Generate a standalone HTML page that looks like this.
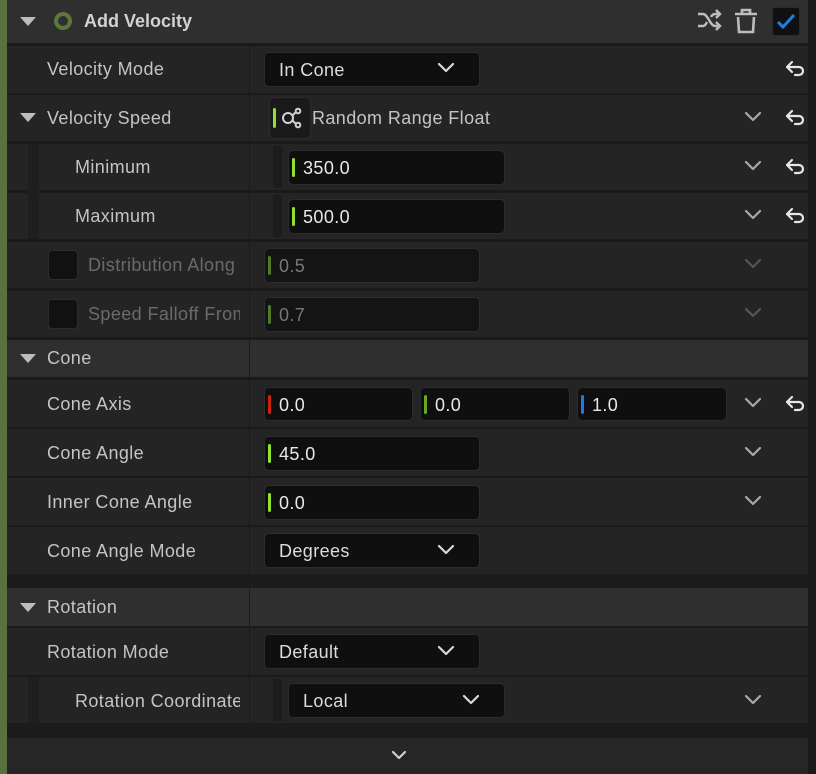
<!DOCTYPE html><html><head><style>
*{margin:0;padding:0;box-sizing:border-box}
body{width:816px;height:774px;background:#1a1a1a;position:relative;overflow:hidden;font-family:"Liberation Sans",sans-serif;font-size:18px;letter-spacing:0.4px;color:#c4c4c4}
div,svg{position:absolute}
.row{left:7px;width:801px;background:#242424}
.hd{background:#2f2f2f}
.dv{left:249px;width:1px;background:#1a1a1a}
.lb{left:47px;white-space:nowrap;line-height:20px}
.in{background:#0f0f0f;border:1.5px solid #2c2c2c;border-radius:5px;height:35px}
.in span{position:absolute;left:14px;top:7px;color:#e8e8e8;line-height:20px}
.bar{position:absolute;left:3px;top:7px;width:3px;height:19px;border-radius:2px;background:#8fe02f}
.tri{width:0;height:0;border-left:8px solid transparent;border-right:8px solid transparent;border-top:9px solid #bdbdbd}
</style></head><body>
<div style="left:0;top:0;width:7px;height:774px;background:#5a7040"></div>
<div class="row hd" style="top:0;height:43px"></div>
<div class="tri" style="left:20px;top:17px"></div>
<div style="left:54px;top:12px;width:18px;height:18px;border:4px solid #5b783a;border-radius:50%"></div>
<div style="left:84px;top:11px;font-weight:bold;font-size:18px;letter-spacing:0;color:#d2d2d2">Add Velocity</div>
<svg style="left:697px;top:8px" width="26" height="24" viewBox="0 0 26 24" fill="none" stroke="#bdbdbd" stroke-width="2.4"><path d="M1 6h5c5 0 7 12 12 12h5M1 18h5c2 0 3-2 4-4M14 9c1-2 2-3 4-3h5M19 2l4 4-4 4M19 14l4 4-4 4"/></svg>
<svg style="left:733px;top:6px" width="26" height="28" viewBox="0 0 26 28" fill="none" stroke="#bdbdbd" stroke-width="2.6"><path d="M2 8h22M9 8V4h8v4M5 11l1 15h14l1-15"/></svg>
<div style="left:772px;top:7px;width:28px;height:29px;background:#101010;border-radius:3px;border:1px solid #2a2a2a"></div>
<svg style="left:776px;top:12px" width="20" height="20" viewBox="0 0 20 20" fill="none" stroke="#1f7fe6" stroke-width="3"><path d="M2 10l5 5 11-12"/></svg>

<div class="row" style="top:46px;height:47px"></div>
<div class="lb" style="top:59px">Velocity Mode</div>
<div class="in" style="left:264px;top:52px;width:216px"><span style="color:#dcdcdc">In Cone</span></div>
<div class="row" style="top:95px;height:46px"></div>
<div class="tri" style="left:20px;top:113px"></div>
<div class="lb" style="top:108px">Velocity Speed</div>
<div class="in" style="left:269px;top:97px;width:42px;height:42px;background:#1a1a1a"><div class="bar" style="top:10px;height:20px"></div></div>
<svg style="left:281px;top:107px" width="22" height="22" viewBox="0 0 22 22" fill="none" stroke="#d0d0d0" stroke-width="2"><circle cx="7" cy="11" r="5"/><circle cx="17" cy="4" r="2.3"/><circle cx="17" cy="18" r="2.3"/><path d="M11 9l4-4M11 13l4 4"/></svg>
<div class="lb" style="left:312px;top:108px">Random Range Float</div>
<div class="row" style="top:144px;height:46px"></div>
<div class="row" style="top:193px;height:46px"></div>
<div style="left:28px;top:144px;width:11px;height:95px;background:#1e1e1e"></div>
<div style="left:273px;top:146px;width:9px;height:42px;background:#1c1c1c"></div>
<div style="left:273px;top:195px;width:9px;height:42px;background:#1c1c1c"></div>
<div class="lb" style="left:75px;top:157px">Minimum</div>
<div class="lb" style="left:75px;top:206px">Maximum</div>
<div class="in" style="left:288px;top:150px;width:217px"><div class="bar"></div><span>350.0</span></div>
<div class="in" style="left:288px;top:199px;width:217px"><div class="bar"></div><span>500.0</span></div>
<div class="row" style="top:242px;height:46px"></div>
<div class="row" style="top:291px;height:46px"></div>
<div style="left:48px;top:250px;width:30px;height:30px;background:#111;border:1.5px solid #2c2c2c;border-radius:4px"></div>
<div style="left:48px;top:299px;width:30px;height:30px;background:#111;border:1.5px solid #2c2c2c;border-radius:4px"></div>
<div class="lb" style="left:88px;top:255px;width:152px;overflow:hidden;color:#6a6a6a">Distribution Along</div>
<div class="lb" style="left:88px;top:304px;width:152px;overflow:hidden;color:#6a6a6a">Speed Falloff From</div>
<div class="in" style="left:264px;top:248px;width:216px;background:#141414"><div class="bar" style="background:#4e7a28"></div><span style="color:#777">0.5</span></div>
<div class="in" style="left:264px;top:297px;width:216px;background:#141414"><div class="bar" style="background:#4e7a28"></div><span style="color:#777">0.7</span></div>
<div class="row hd" style="top:340px;height:37px"></div>
<div class="tri" style="left:20px;top:354px"></div>
<div class="lb" style="top:348px">Cone</div>
<div class="row" style="top:380px;height:47px"></div>
<div class="row" style="top:429px;height:47px"></div>
<div class="row" style="top:478px;height:47px"></div>
<div class="row" style="top:527px;height:47px"></div>
<div class="lb" style="top:394px">Cone Axis</div>
<div class="lb" style="top:443px">Cone Angle</div>
<div class="lb" style="top:492px">Inner Cone Angle</div>
<div class="lb" style="top:541px">Cone Angle Mode</div>
<div class="in" style="left:264px;top:387px;width:149px;height:34px"><div class="bar" style="background:#d0220a"></div><span>0.0</span></div>
<div class="in" style="left:420px;top:387px;width:150px;height:34px"><div class="bar" style="background:#6aa81e"></div><span>0.0</span></div>
<div class="in" style="left:577px;top:387px;width:150px;height:34px"><div class="bar" style="background:#2178ee"></div><span>1.0</span></div>
<div class="in" style="left:264px;top:436px;width:216px"><div class="bar"></div><span>45.0</span></div>
<div class="in" style="left:264px;top:485px;width:216px"><div class="bar"></div><span>0.0</span></div>
<div class="in" style="left:264px;top:533px;width:216px"><span style="color:#dcdcdc">Degrees</span></div>
<div class="row" style="top:574px;height:14px;background:#1c1c1c"></div>
<div class="row hd" style="top:588px;height:38px"></div>
<div class="tri" style="left:20px;top:603px"></div>
<div class="lb" style="top:597px">Rotation</div>
<div class="row" style="top:628px;height:47px"></div>
<div class="row" style="top:677px;height:46px"></div>
<div style="left:28px;top:677px;width:11px;height:46px;background:#1e1e1e"></div>
<div style="left:273px;top:679px;width:9px;height:42px;background:#1c1c1c"></div>
<div class="lb" style="top:642px">Rotation Mode</div>
<div class="lb" style="left:75px;top:691px;width:165px;overflow:hidden">Rotation Coordinate</div>
<div class="in" style="left:264px;top:634px;width:216px"><span style="color:#dcdcdc">Default</span></div>
<div class="in" style="left:288px;top:683px;width:217px"><span style="color:#dcdcdc">Local</span></div>
<div class="row" style="top:723px;height:15px;background:#1c1c1c"></div>
<div class="row" style="top:738px;height:36px;background:#262626"></div>

<div class="dv" style="top:46px;height:294px"></div>
<div class="dv" style="top:340px;height:234px"></div>
<div class="dv" style="top:588px;height:135px"></div>

<svg width="816" height="774" style="left:0;top:0" fill="none" stroke-width="2.2" stroke-linecap="round" stroke-linejoin="round">
<g stroke="#d8d8d8">
<path d="M439 64l7 7 7-7M439 546l7 7 7-7M439 647l7 7 7-7M464 696l7 7 7-7"/>
</g>
<g stroke="#a8a8a8">
<path d="M746 113l7 7 7-7M746 162l7 7 7-7M746 211l7 7 7-7M746 399l7 7 7-7M746 448l7 7 7-7M746 497l7 7 7-7M746 696l7 7 7-7"/>
</g>
<g stroke="#555"><path d="M746 260l7 7 7-7M746 309l7 7 7-7"/></g>
<path d="M393 752l6 6 6-6" stroke="#cfcfcf"/>
<g stroke="#e6e6e6">
<path d="M792 62l-5 5 5 5M787 67h12a4 4 0 0 1 0 8h-4"/>
<path d="M792 111l-5 5 5 5M787 116h12a4 4 0 0 1 0 8h-4"/>
<path d="M792 160l-5 5 5 5M787 165h12a4 4 0 0 1 0 8h-4"/>
<path d="M792 209l-5 5 5 5M787 214h12a4 4 0 0 1 0 8h-4"/>
<path d="M792 397l-5 5 5 5M787 402h12a4 4 0 0 1 0 8h-4"/>
</g>
</svg>
</body></html>
